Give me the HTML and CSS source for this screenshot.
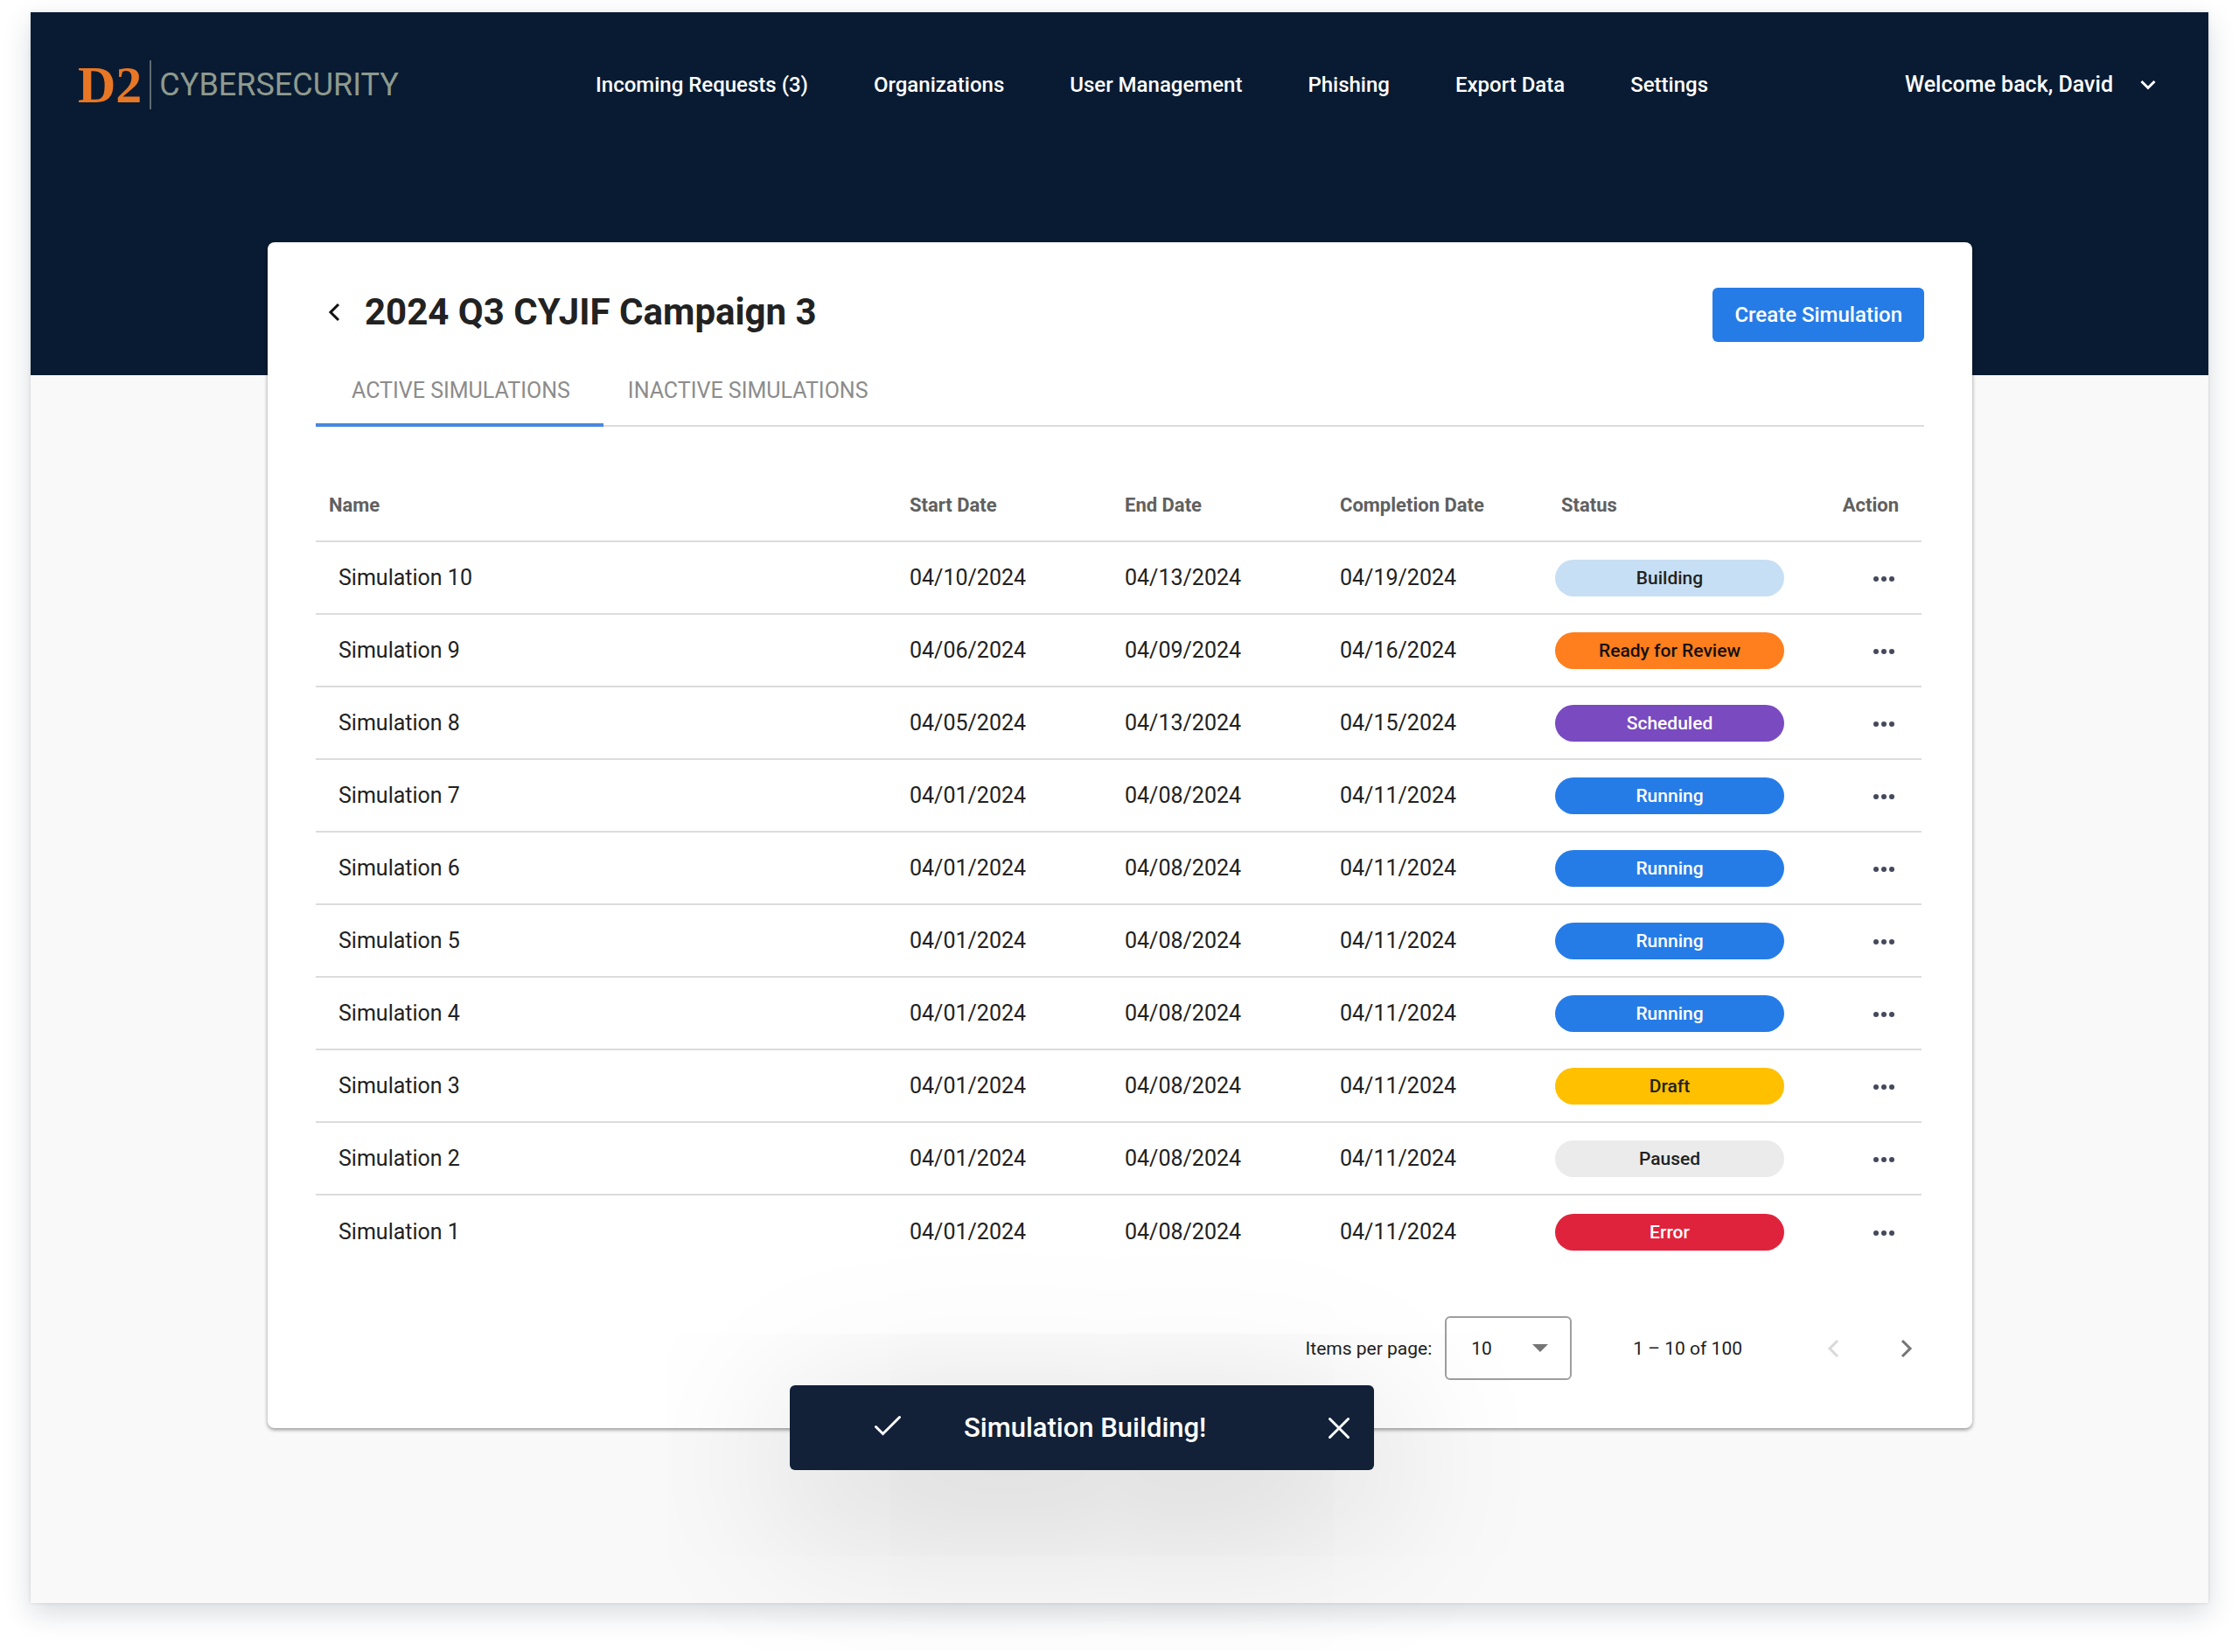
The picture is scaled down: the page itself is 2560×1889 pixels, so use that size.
FILE: index.html
```html
<!DOCTYPE html>
<html lang="en">
<head>
<meta charset="utf-8">
<meta name="viewport" content="width=device-width, initial-scale=1">
<title>D2 Cybersecurity – Simulations</title>
<link rel="stylesheet" href="styles.css">
</head>
<body>
<div class="app">
  <header class="banner">
    <div class="topbar">
      <a class="logo" href="#"><span class="logo-mark">D2</span><span class="logo-word">CYBERSECURITY</span></a>
      <nav class="nav" aria-label="Main">
        <a href="#">Incoming Requests (3)</a>
        <a href="#">Organizations</a>
        <a href="#">User Management</a>
        <a href="#">Phishing</a>
        <a href="#">Export Data</a>
        <a href="#">Settings</a>
      </nav>
      <button class="account" type="button">Welcome back, David
        <svg width="18" height="12" viewBox="0 0 18 12" fill="none" stroke="currentColor" stroke-width="3" aria-hidden="true"><path d="M1.5 2 9 9.500 16.500 2"/></svg>
      </button>
    </div>
  </header>

  <main class="content">
    <section class="card">
      <div class="card-head">
        <div class="heading">
          <button class="back" type="button" aria-label="Back"><svg width="14" height="22" viewBox="0 0 14 22" fill="none" stroke="currentColor" stroke-width="3" aria-hidden="true"><path d="M12 2 3 11l9 9"/></svg></button>
          <h1 class="title">2024 Q3 CYJIF Campaign 3</h1>
        </div>
        <button class="create" type="button">Create Simulation</button>
      </div>

      <div class="tabs" role="tablist">
        <button class="tab tab-active" type="button" role="tab" aria-selected="true">ACTIVE SIMULATIONS</button>
        <button class="tab" type="button" role="tab" aria-selected="false">INACTIVE SIMULATIONS</button>
      </div>

      <table class="table">
        <colgroup><col><col class="col-date"><col class="col-date"><col class="col-date"><col class="col-status"><col class="col-action"></colgroup>
        <thead>
          <tr><th class="name">Name</th><th>Start Date</th><th>End Date</th><th>Completion Date</th><th class="status">Status</th><th class="action">Action</th></tr>
        </thead>
        <tbody>
          <tr><td class="name">Simulation 10</td><td>04/10/2024</td><td>04/13/2024</td><td>04/19/2024</td><td><span class="pill building">Building</span></td><td class="action"><button class="more" type="button" aria-label="Actions"><svg width="24" height="6" viewBox="0 0 24 6" aria-hidden="true"><circle cx="3" cy="3" r="3"/><circle cx="12" cy="3" r="3"/><circle cx="21" cy="3" r="3"/></svg></button></td></tr>
          <tr><td class="name">Simulation 9</td><td>04/06/2024</td><td>04/09/2024</td><td>04/16/2024</td><td><span class="pill review">Ready for Review</span></td><td class="action"><button class="more" type="button" aria-label="Actions"><svg width="24" height="6" viewBox="0 0 24 6" aria-hidden="true"><circle cx="3" cy="3" r="3"/><circle cx="12" cy="3" r="3"/><circle cx="21" cy="3" r="3"/></svg></button></td></tr>
          <tr><td class="name">Simulation 8</td><td>04/05/2024</td><td>04/13/2024</td><td>04/15/2024</td><td><span class="pill scheduled">Scheduled</span></td><td class="action"><button class="more" type="button" aria-label="Actions"><svg width="24" height="6" viewBox="0 0 24 6" aria-hidden="true"><circle cx="3" cy="3" r="3"/><circle cx="12" cy="3" r="3"/><circle cx="21" cy="3" r="3"/></svg></button></td></tr>
          <tr><td class="name">Simulation 7</td><td>04/01/2024</td><td>04/08/2024</td><td>04/11/2024</td><td><span class="pill running">Running</span></td><td class="action"><button class="more" type="button" aria-label="Actions"><svg width="24" height="6" viewBox="0 0 24 6" aria-hidden="true"><circle cx="3" cy="3" r="3"/><circle cx="12" cy="3" r="3"/><circle cx="21" cy="3" r="3"/></svg></button></td></tr>
          <tr><td class="name">Simulation 6</td><td>04/01/2024</td><td>04/08/2024</td><td>04/11/2024</td><td><span class="pill running">Running</span></td><td class="action"><button class="more" type="button" aria-label="Actions"><svg width="24" height="6" viewBox="0 0 24 6" aria-hidden="true"><circle cx="3" cy="3" r="3"/><circle cx="12" cy="3" r="3"/><circle cx="21" cy="3" r="3"/></svg></button></td></tr>
          <tr><td class="name">Simulation 5</td><td>04/01/2024</td><td>04/08/2024</td><td>04/11/2024</td><td><span class="pill running">Running</span></td><td class="action"><button class="more" type="button" aria-label="Actions"><svg width="24" height="6" viewBox="0 0 24 6" aria-hidden="true"><circle cx="3" cy="3" r="3"/><circle cx="12" cy="3" r="3"/><circle cx="21" cy="3" r="3"/></svg></button></td></tr>
          <tr><td class="name">Simulation 4</td><td>04/01/2024</td><td>04/08/2024</td><td>04/11/2024</td><td><span class="pill running">Running</span></td><td class="action"><button class="more" type="button" aria-label="Actions"><svg width="24" height="6" viewBox="0 0 24 6" aria-hidden="true"><circle cx="3" cy="3" r="3"/><circle cx="12" cy="3" r="3"/><circle cx="21" cy="3" r="3"/></svg></button></td></tr>
          <tr><td class="name">Simulation 3</td><td>04/01/2024</td><td>04/08/2024</td><td>04/11/2024</td><td><span class="pill draft">Draft</span></td><td class="action"><button class="more" type="button" aria-label="Actions"><svg width="24" height="6" viewBox="0 0 24 6" aria-hidden="true"><circle cx="3" cy="3" r="3"/><circle cx="12" cy="3" r="3"/><circle cx="21" cy="3" r="3"/></svg></button></td></tr>
          <tr><td class="name">Simulation 2</td><td>04/01/2024</td><td>04/08/2024</td><td>04/11/2024</td><td><span class="pill paused">Paused</span></td><td class="action"><button class="more" type="button" aria-label="Actions"><svg width="24" height="6" viewBox="0 0 24 6" aria-hidden="true"><circle cx="3" cy="3" r="3"/><circle cx="12" cy="3" r="3"/><circle cx="21" cy="3" r="3"/></svg></button></td></tr>
          <tr><td class="name">Simulation 1</td><td>04/01/2024</td><td>04/08/2024</td><td>04/11/2024</td><td><span class="pill error">Error</span></td><td class="action"><button class="more" type="button" aria-label="Actions"><svg width="24" height="6" viewBox="0 0 24 6" aria-hidden="true"><circle cx="3" cy="3" r="3"/><circle cx="12" cy="3" r="3"/><circle cx="21" cy="3" r="3"/></svg></button></td></tr>
        </tbody>
      </table>

      <div class="pager">
        <label class="pager-label" for="page-size">Items per page:</label>
        <div class="select">
          <select id="page-size"><option>10</option><option>25</option><option>50</option></select>
          <svg width="18" height="9" viewBox="0 0 18 9" fill="#757575" aria-hidden="true"><path d="M0 0h18L9 9z"/></svg>
        </div>
        <span class="range">1 – 10 of 100</span>
        <button class="page-btn" type="button" aria-label="Previous page" disabled><svg width="14" height="22" viewBox="0 0 14 22" fill="none" stroke="currentColor" stroke-width="3" aria-hidden="true"><path d="M12 2 3 11l9 9"/></svg></button>
        <button class="page-btn" type="button" aria-label="Next page"><svg width="14" height="22" viewBox="0 0 14 22" fill="none" stroke="currentColor" stroke-width="3" aria-hidden="true"><path d="m2 2 9 9-9 9"/></svg></button>
      </div>
    </section>
  </main>

  <div class="toast" role="status">
    <svg class="toast-check" width="32" height="24" viewBox="0 0 32 24" fill="none" stroke="currentColor" stroke-width="3" stroke-linecap="round" aria-hidden="true"><path d="m2.500 13.500 8 8L29.500 2.500"/></svg>
    <span class="toast-text">Simulation Building!</span>
    <button class="toast-close" type="button" aria-label="Dismiss"><svg width="26" height="26" viewBox="0 0 26 26" fill="none" stroke="currentColor" stroke-width="3" stroke-linecap="round" aria-hidden="true"><path d="m2.500 2.500 21 21M23.500 2.500l-21 21"/></svg></button>
  </div>
</div>
</body>
</html>
```
FILE: styles.css
```css
* { box-sizing: border-box; }

body {
  margin: 0;
  padding: 14px 35px 55px;
  background: #fff;
  color: #222;
  font-family: Roboto, sans-serif;
  font-size: 24px;
  line-height: 28px;
}

button, select {
  margin: 0;
  padding: 0;
  border: 0;
  background: none;
  color: inherit;
  font: inherit;
  cursor: pointer;
}

a { color: inherit; text-decoration: none; }
svg { display: block; flex: none; }

.app {
  position: relative;
  background: #f9f9f9;
  box-shadow: 0 12px 30px rgba(15, 35, 60, 0.16), 0 0 4px rgba(15, 35, 60, 0.12);
}

/* Banner */
.banner {
  height: 415px;
  padding: 48px 60px 0 54px;
  background: #091b32;
  color: #fff;
}

.topbar {
  display: flex;
  align-items: center;
  justify-content: space-between;
  height: 70px;
  font-weight: 500;
}

.logo { display: flex; align-items: center; gap: 9px; }

.logo-mark {
  color: #e87725;
  font-family: "Liberation Serif", serif;
  font-weight: 700;
  font-size: 60px;
  line-height: 56px;
}

.logo-word {
  padding-left: 9px;
  border-left: 2px solid #5c6a70;
  color: #8f9a8e;
  font-weight: 400;
  font-size: 36px;
  line-height: 56px;
}

.nav { display: flex; gap: 75px; }

.account { display: flex; align-items: center; gap: 31px; font-size: 25px; }

/* Card */
.content { padding: 0 270px 200px 271px; }

.card {
  margin-top: -152px;
  padding: 52px 55px 55px;
  border-radius: 8px;
  background: #fff;
  box-shadow: 0 2px 4px rgba(0, 0, 0, 0.4);
}

.content, .card { position: relative; }

.card-head {
  display: flex;
  justify-content: space-between;
  height: 62px;
}

.heading { display: flex; align-items: center; height: 56px; }

.back { padding: 8px 14px; color: #111; }

.title {
  margin: 0 0 0 14px;
  font-weight: 700;
  font-size: 42px;
  line-height: 48px;
}

.create {
  height: 62px;
  padding: 0 25px;
  border-radius: 6px;
  background: #267ce7;
  color: #fff;
  font-weight: 500;
}

.tabs {
  display: flex;
  margin-top: 13px;
  border-bottom: 2px solid #dcdcdc;
}

.tab {
  height: 84px;
  margin-bottom: -2px;
  padding: 2px 28px 0;
  color: #8c8c8c;
  font-size: 25px;
}

.tab-active {
  padding: 6px 38px 0 41px;
  border-bottom: 4px solid #4a86e0;
}

/* Table */
.table {
  width: calc(100% - 3px);
  margin-top: 49px;
  border-spacing: 0;
  table-layout: fixed;
}

.col-date { width: 246px; }
.col-status { width: 280px; }
.col-action { width: 139px; }

th, td {
  height: 83px;
  padding: 0;
  border-bottom: 2px solid #dcdcdc;
  text-align: left;
  vertical-align: middle;
}

th { color: #606060; font-weight: 700; font-size: 22px; }
td { font-size: 25px; }
tbody tr:last-child td { border-bottom: 0; }

th.name { padding-left: 15px; }
td.name { padding-left: 26px; }
th.status { padding-left: 7px; }
.action { padding-right: 26px; text-align: right; }

.more { padding: 16px 5px 14px; color: #444a5c; }
.more svg { fill: currentColor; }

.pill {
  display: block;
  width: 262px;
  border-radius: 21px;
  font-weight: 500;
  font-size: 21px;
  line-height: 42px;
  text-align: center;
}

.building { background: #c7dff4; }
.review { background: #ff7e1d; color: #111; }
.scheduled { background: #794ac0; color: #fff; }
.running { background: #267ce7; color: #fff; }
.draft { background: #ffc000; }
.paused { background: #ebebeb; }
.error { background: #e0233c; color: #fff; }

/* Pagination */
.pager {
  display: flex;
  align-items: center;
  justify-content: flex-end;
  margin-top: 55px;
  color: #222;
  font-size: 21px;
}

.select {
  display: grid;
  align-items: center;
  width: 145px;
  margin-left: 15px;
}

.select > * { grid-area: 1 / 1; }

.select select {
  width: 100%;
  height: 73px;
  padding-left: 28px;
  border: 2px solid #9e9e9e;
  border-radius: 6px;
  appearance: none;
}

.select svg { justify-self: end; margin-right: 27px; pointer-events: none; }

.range { margin: 0 62px 0 70px; }

.page-btn { padding: 14px 35px; color: #757575; }
.page-btn:disabled { color: #d9d9d9; }
.page-btn:last-child { margin-right: -22px; }

/* Toast floats over the card's lower edge */
.toast {
  position: absolute;
  left: 868px;
  bottom: 152px;
  display: flex;
  align-items: center;
  width: 668px;
  height: 97px;
  padding: 0 27px 0 96px;
  border-radius: 6px;
  background: #122138;
  box-shadow: 0 40px 200px rgba(0, 0, 0, 0.23);
  color: #fff;
  font-weight: 500;
  font-size: 31px;
}

.toast-check { margin-bottom: 5px; }
.toast-text { flex: 1; margin-left: 71px; }
```
